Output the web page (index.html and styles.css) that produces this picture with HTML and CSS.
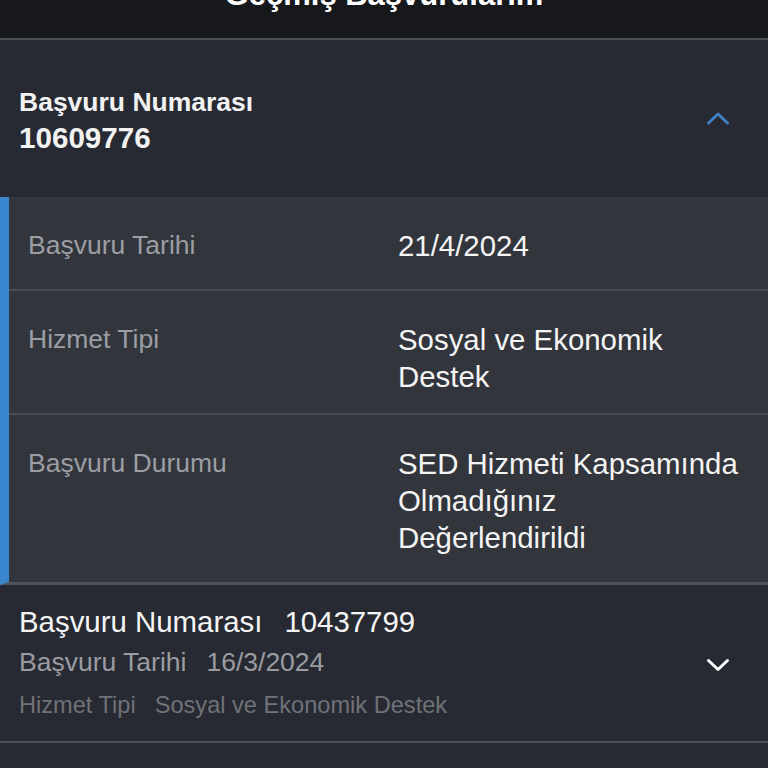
FILE: index.html
```html
<!DOCTYPE html>
<html lang="tr">
<head>
  <meta charset="UTF-8" />
  <meta name="viewport" content="width=device-width, initial-scale=1.0" />
  <title>Geçmiş Başvurularım</title>
  <link rel="stylesheet" href="styles.css">
</head>
<body>
  <header class="topbar">
    <h1>Geçmiş Başvurularım</h1>
  </header>

  <section class="item open">
    <div class="item-head">
      <div class="head-text">
        <div class="head-label">Başvuru Numarası</div>
        <div class="head-number">10609776</div>
      </div>
      <svg class="chevron up" width="24" height="14" viewBox="0 0 24 14">
        <path d="M2.5 12 L12 3 L21.5 12" fill="none" stroke="#3f82c6" stroke-width="3" stroke-linecap="round" stroke-linejoin="round"/>
      </svg>
    </div>
    <div class="details">
      <div class="row">
        <div class="label">Başvuru Tarihi</div>
        <div class="value">21/4/2024</div>
      </div>
      <div class="row row-service">
        <div class="label">Hizmet Tipi</div>
        <div class="value">Sosyal ve Ekonomik Destek</div>
      </div>
      <div class="row">
        <div class="label">Başvuru Durumu</div>
        <div class="value">SED Hizmeti Kapsamında Olmadığınız Değerlendirildi</div>
      </div>
    </div>
  </section>

  <section class="item closed">
    <div class="summary">
      <div class="line line-main"><span>Başvuru Numarası</span><span>10437799</span></div>
      <div class="line line-date"><span>Başvuru Tarihi</span><span>16/3/2024</span></div>
      <div class="line line-type"><span>Hizmet Tipi</span><span>Sosyal ve Ekonomik Destek</span></div>
    </div>
    <svg class="chevron down" width="24" height="14" viewBox="0 0 24 14">
      <path d="M2.5 2.5 L12 11.5 L21.5 2.5" fill="none" stroke="#ffffff" stroke-width="3" stroke-linecap="round" stroke-linejoin="round"/>
    </svg>
  </section>
</body>
</html>
```

FILE: styles.css
```css
body {
  margin: 0;
  font-family: 'Liberation Sans', Arial, sans-serif;
  background: #272a32;
  color: #f2f2f2;
}
.topbar {
  height: 38px;
  overflow: hidden;
  background: #16181c;
  border-bottom: 2px solid #4a4d55;
  text-align: center;
}
.topbar h1 {
  margin: -21px 0 0;
  font-size: 31px;
  line-height: 31px;
  font-weight: bold;
  color: #fff;
}
.item-head {
  display: flex;
  align-items: center;
  justify-content: space-between;
  padding: 44px 38px 41px 19px;
  background: #272a32;
}
.head-label {
  font-size: 26.5px;
  line-height: 36px;
  font-weight: bold;
}
.head-number {
  font-size: 29.6px;
  line-height: 36px;
  font-weight: bold;
}
.chevron.up {
  margin-top: -4px;
}
.details {
  background: #32353c;
  border-left: 9px solid #3a87d0;
  border-bottom: 3px solid #50535a;
}
.row {
  display: grid;
  grid-template-columns: 370px 1fr;
  padding: 30px 24px 25px 19px;
  border-bottom: 2px solid #4a4d55;
}
.row-service {
  padding-bottom: 18px;
}
.row:last-child {
  border-bottom: none;
  padding-bottom: 26px;
}
.label {
  font-size: 26.5px;
  line-height: 37px;
  color: #9c9ea4;
}
.value {
  font-size: 29.4px;
  line-height: 37px;
  color: #f4f4f4;
}
.item.closed {
  display: flex;
  align-items: center;
  justify-content: space-between;
  padding: 17px 38px 18px 19px;
  border-bottom: 2px solid #4a4d55;
}
.line-main span + span {
  margin-left: 22px;
}
.line-date span + span {
  margin-left: 20px;
}
.line-type span + span {
  margin-left: 19px;
}
.line-main {
  font-size: 29.4px;
  line-height: 40px;
  color: #f4f4f4;
}
.line-date {
  font-size: 26.5px;
  line-height: 40px;
  color: #9a9ca1;
}
.line-type {
  margin-top: 5px;
  font-size: 23.6px;
  line-height: 36px;
  color: #707278;
}
.chevron.down {
  margin-top: 4px;
}
```
